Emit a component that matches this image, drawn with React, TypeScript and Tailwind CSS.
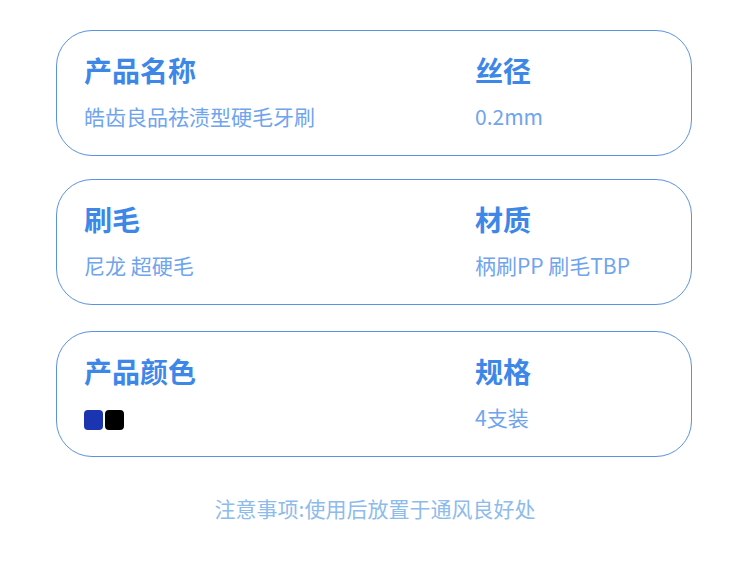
const rows = [
  { a: "产品名称", av: "皓齿良品祛渍型硬毛牙刷", b: "丝径", bv: "0.2mm" },
  { a: "刷毛", av: "尼龙 超硬毛", b: "材质", bv: "柄刷PP 刷毛TBP" },
  { a: "产品颜色", av: null, b: "规格", bv: "4支装" },
]

function Card({ a, av, b, bv }: { a: string; av: string | null; b: string; bv: string }) {
  return (
    <div className="ml-[56px] w-[636px] h-[126px] rounded-[36px] border-[1.5px] border-[#5b92e0] bg-white grid grid-cols-[391px_1fr] pl-[27px] pt-[20px]">
      <div>
        <div className="text-[28px] leading-[38px] font-bold text-[#3d87e8]">{a}</div>
        {av ? (
          <div className="mt-[13px] text-[21px] leading-[28px] text-[#6fa4ee]">{av}</div>
        ) : (
          <div className="mt-[20px] flex gap-[2px]">
            <div className="w-[19px] h-[20px] rounded-[4px] bg-[#1b35b0]" />
            <div className="w-[19px] h-[20px] rounded-[4px] bg-black" />
          </div>
        )}
      </div>
      <div>
        <div className="text-[28px] leading-[38px] font-bold text-[#3d87e8]">{b}</div>
        <div className="mt-[13px] text-[21px] leading-[28px] text-[#6fa4ee]">{bv}</div>
      </div>
    </div>
  )
}

export default function App() {
  return (
    <main
      className="w-[750px] h-[567px] bg-white pt-[30px] overflow-hidden"
      style={{ fontFamily: '"Noto Sans CJK SC", "Noto Sans", sans-serif' }}
    >
      <Card {...rows[0]} />
      <div className="h-[23px]" />
      <Card {...rows[1]} />
      <div className="h-[26px]" />
      <Card {...rows[2]} />
      <div className="mt-[37px] text-center text-[21px] leading-[28px] text-[#8dbbec]">
        注意事项:使用后放置于通风良好处
      </div>
    </main>
  )
}
